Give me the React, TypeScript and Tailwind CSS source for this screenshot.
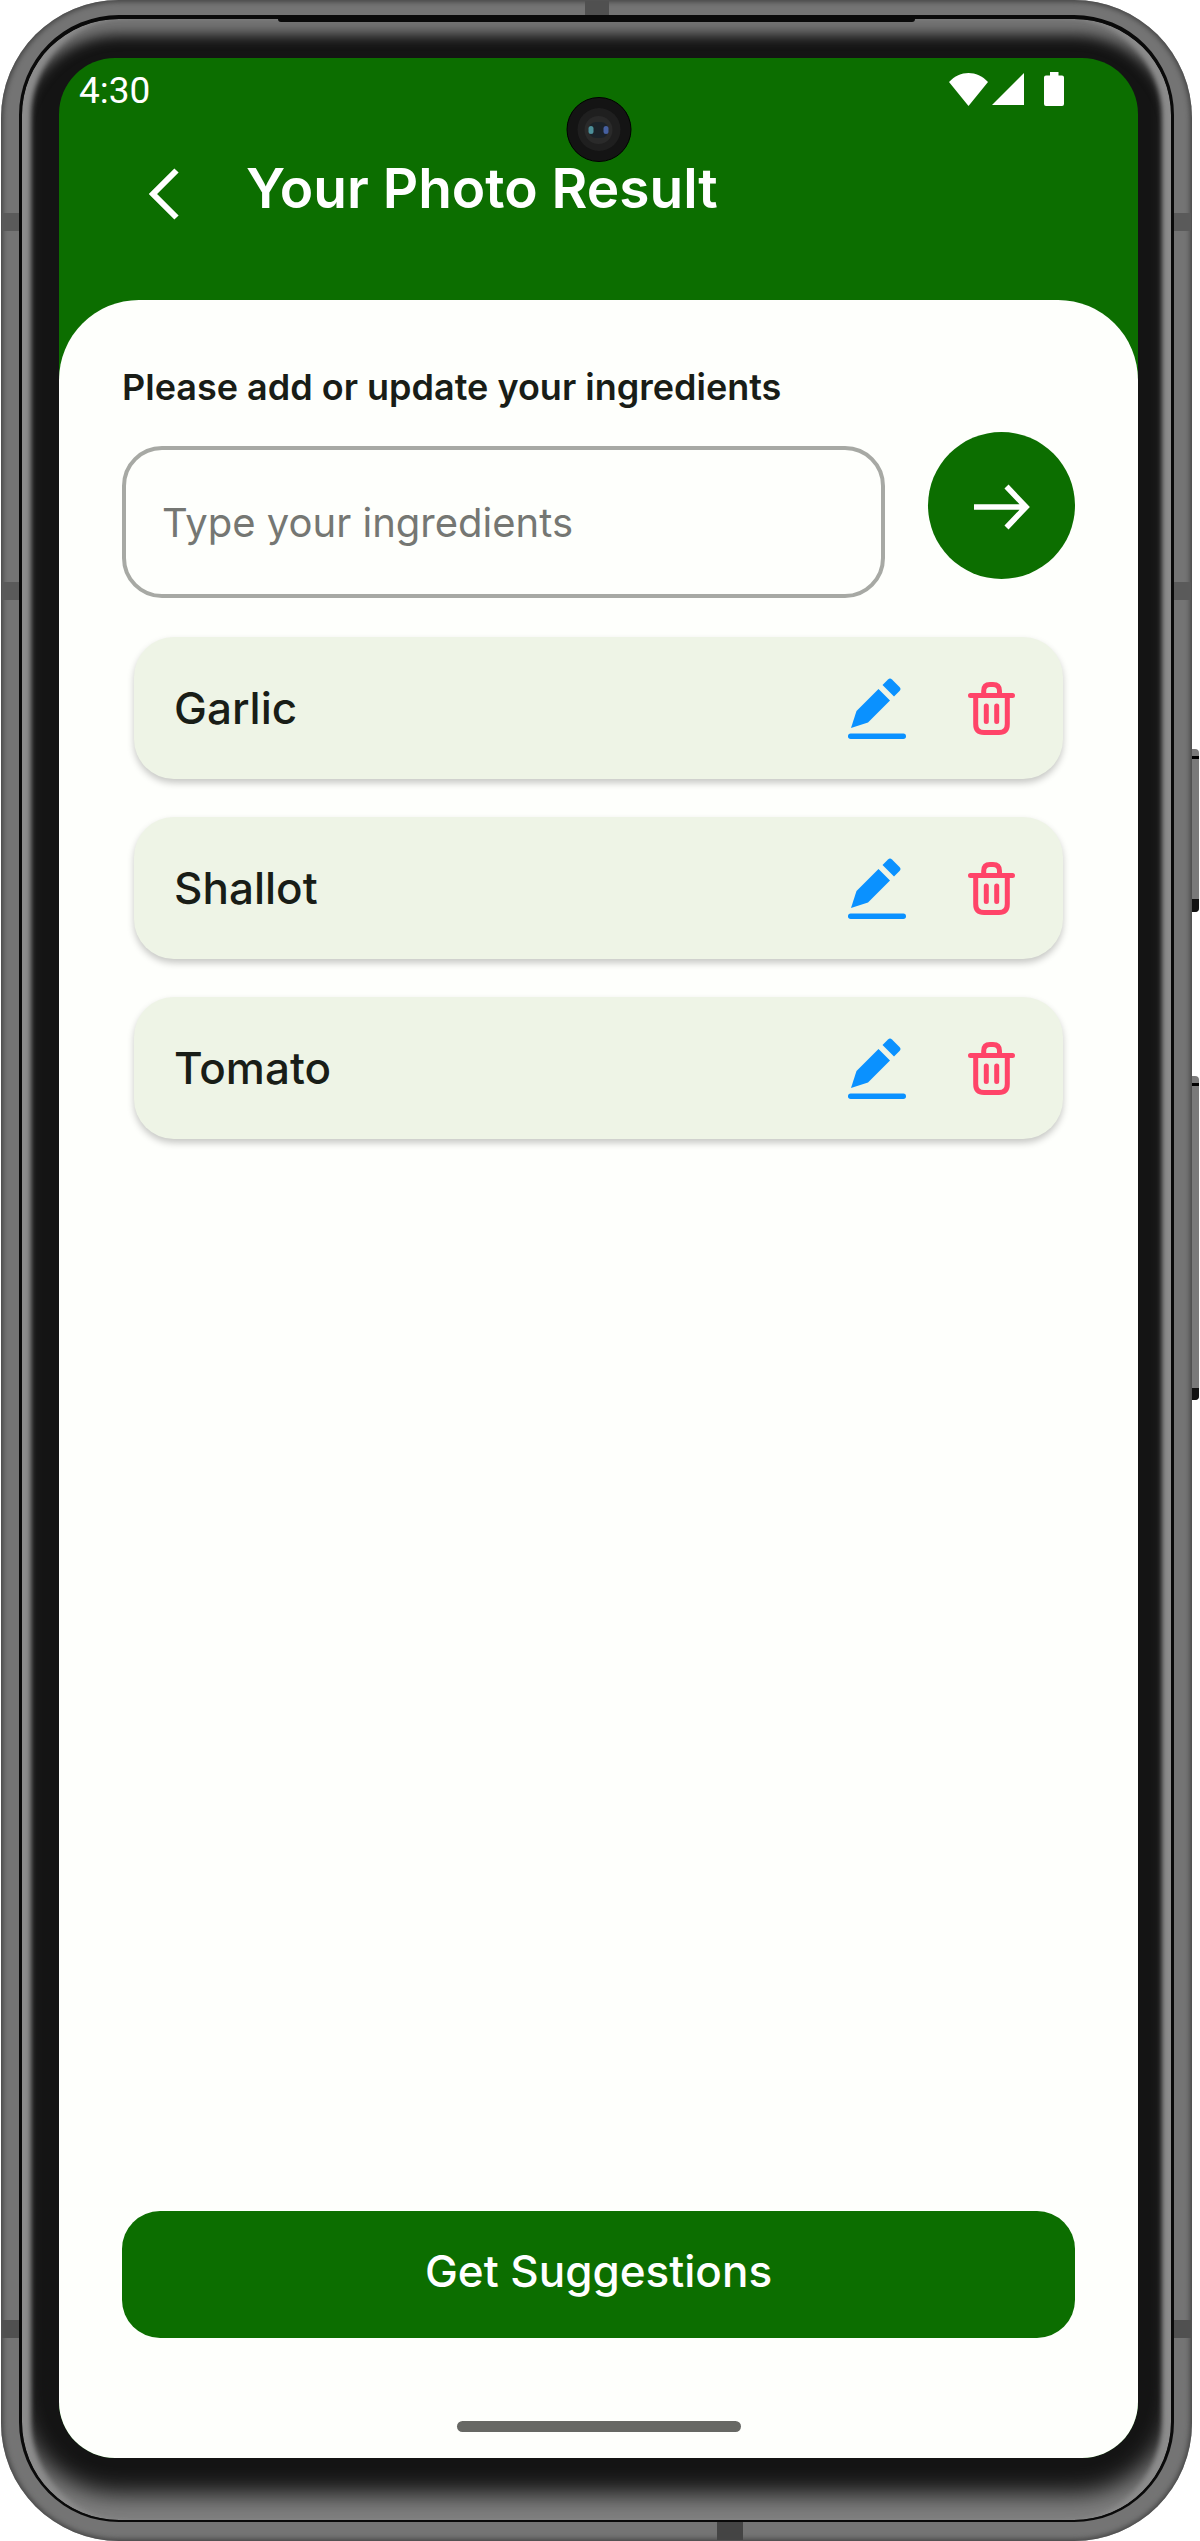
import { useState } from "react";

function WifiIcon() {
  return (
    <svg viewBox="0 0 39 33" className="h-[33px] w-[39px]" fill="currentColor" aria-hidden="true">
      <path d="M0 9C11-3 28-3 39 9L19.500 33Z" />
    </svg>
  );
}

function SignalIcon() {
  return (
    <svg viewBox="0 0 32 32" className="h-8 w-8" fill="currentColor" aria-hidden="true">
      <path d="M32 0V32H0Z" />
    </svg>
  );
}

function BatteryIcon() {
  return (
    <svg viewBox="0 0 20 34" className="h-[34px] w-5" fill="currentColor" aria-hidden="true">
      <path d="M6 0h8.500v3.500H18q2 0 2 2V32q0 2-2 2H2q-2 0-2-2V5.500q0-2 2-2h4Z" />
    </svg>
  );
}

function BackIcon() {
  return (
    <svg viewBox="0 0 32 52" className="h-[52px] w-8" fill="none" stroke="currentColor" strokeWidth="6" aria-hidden="true">
      <path d="M28.500 2.500L5 26L28.500 49.500" />
    </svg>
  );
}

function ArrowIcon() {
  return (
    <svg viewBox="0 0 56 46" className="h-[46px] w-14" fill="none" stroke="currentColor" strokeWidth="5.600" aria-hidden="true">
      <path d="M0 23H52M32.500 2.500L52 23L32.500 43.500" />
    </svg>
  );
}

function PencilIcon() {
  return (
    <svg viewBox="0 0 58 61" className="h-[61px] w-[58px]" fill="currentColor" aria-hidden="true">
      <path d="M30.500 11L42 22.500L20 44.500L3 50L8.500 33Z" />
      <path d="M34.500 7L40 1.500Q42 -.5 44 1.500L51.500 9Q53.500 11 51.500 13L46 18.500Z" />
      <rect x="0" y="55.500" width="58" height="5.400" rx="2.700" />
    </svg>
  );
}

function TrashIcon() {
  return (
    <svg
      viewBox="0 0 47 53"
      className="h-[53px] w-[47px]"
      fill="none"
      stroke="currentColor"
      strokeWidth="5"
      strokeLinecap="round"
      strokeLinejoin="round"
      aria-hidden="true"
    >
      <path d="M2.500 13.500H44.500M7.700 14V42Q7.700 50.500 16 50.500H31Q39.300 50.500 39.300 42V14M15.700 12V9Q15.700 2.500 22 2.500H25Q31.500 2.500 31.500 9V12M18.300 24V39.500M28.700 24V39.500" />
    </svg>
  );
}

function Camera() {
  return (
    <div className="absolute top-[39px] left-1/2 flex size-[65px] -translate-x-1/2 items-center justify-center rounded-full border border-black bg-[#141414]">
      <div className="flex size-[43px] items-center justify-center rounded-full bg-[#1f1f1f]">
        <div className="flex size-7 items-center justify-center rounded-full bg-[#2a2a2a]">
          <div className="flex h-4 w-5 items-center justify-between rounded-full bg-[#1b2229]">
            <span className="h-2 w-[5px] rounded-full bg-[#4d8f99]" />
            <span className="h-2 w-[5px] rounded-full bg-[#4660a0]" />
          </div>
        </div>
      </div>
    </div>
  );
}

function IngredientCard({ name, onDelete }: { name: string; onDelete: () => void }) {
  return (
    <li className="flex h-[142px] items-center rounded-[40px] bg-[#eef4e6] pr-12 pl-10 shadow-[0_4px_7px_rgba(0,0,0,0.22)]">
      <span className="grow text-[44px] leading-[60px] font-medium">{name}</span>
      <button type="button" aria-label={`Edit ${name}`} className="mr-[62px] text-[#0a91ff]">
        <PencilIcon />
      </button>
      <button type="button" aria-label={`Delete ${name}`} onClick={onDelete} className="text-[#ff4469]">
        <TrashIcon />
      </button>
    </li>
  );
}

export default function App() {
  const [items, setItems] = useState(["Garlic", "Shallot", "Tomato"]);
  const [draft, setDraft] = useState("");

  const add = () => {
    if (draft.trim()) {
      setItems([...items, draft.trim()]);
      setDraft("");
    }
  };

  return (
    <div className="min-h-screen bg-white pr-2 pl-px font-['Inter',sans-serif] text-[#191d17]">
      <div className="relative flex min-h-screen flex-col rounded-[118px] bg-[#747474] px-[18px] pt-[15px] pb-[19px] shadow-[inset_0_0_5px_2px_#454545]">
        {/* Side keys */}
        <div className="absolute top-[749px] -right-[7px] h-[163px] w-[7px] rounded-r-sm bg-[#7a7a7a]">
          <div className="mt-[7px] h-[3px] bg-black" />
          <div className="mt-[140px] h-[13px] rounded-br-sm bg-[#111]" />
        </div>
        <div className="absolute top-[1076px] -right-[7px] h-[324px] w-[7px] rounded-r-sm bg-[#7a7a7a]">
          <div className="mt-[7px] h-[3px] bg-black" />
          <div className="mt-[302px] h-3 rounded-br-sm bg-[#111]" />
        </div>
        {/* Antenna bands */}
        <div className="absolute top-[213px] left-px h-[18px] w-[17px] bg-[#5a5a5a]" />
        <div className="absolute top-[213px] right-px h-[18px] w-[17px] bg-[#5a5a5a]" />
        <div className="absolute top-[582px] left-px h-[18px] w-[17px] bg-[#5a5a5a]" />
        <div className="absolute top-[582px] right-px h-[18px] w-[17px] bg-[#5a5a5a]" />
        <div className="absolute bottom-[203px] left-px h-[18px] w-[17px] bg-[#505050]" />
        <div className="absolute right-px bottom-[203px] h-[18px] w-[17px] bg-[#505050]" />
        <div className="absolute top-px left-[584px] h-[14px] w-6 bg-[#505050]" />
        <div className="absolute bottom-px left-[716px] h-[18px] w-[26px] bg-[#444]" />

        <div className="relative flex grow flex-col rounded-[100px] border-x-[3px] border-t-4 border-b-2 border-[#0a0a0a] bg-[#141414] pt-[39px] pr-[33px] pb-[62px] pl-[37px] shadow-[inset_11px_0_5px_-2px_#8c8c8c,inset_-11px_0_5px_-2px_#8c8c8c,inset_0_-32px_24px_-6px_#808080,inset_0_19px_14px_-3px_#757575]">
          {/* Earpiece slot */}
          <div className="absolute inset-x-[256px] top-0 h-[3px] rounded-b-full bg-[#0a0a0a]" />
          <div className="relative flex grow flex-col overflow-hidden rounded-[56px] bg-[#0c6e00]">
            <Camera />
            <header className="h-[242px] text-white">
              <div className="flex items-start pt-2 pr-[74px] pl-5">
                <span className="grow font-['Roboto',sans-serif] text-[37px] leading-[50px]">4:30</span>
                <div className="flex items-center pt-1.5">
                  <WifiIcon />
                  <span className="mr-5 ml-1">
                    <SignalIcon />
                  </span>
                  <BatteryIcon />
                </div>
              </div>
              <div className="flex items-center gap-[66px] pt-10 pl-[89px]">
                <button type="button" aria-label="Back" className="mt-3">
                  <BackIcon />
                </button>
                <h1 className="text-[55px] leading-[60px] font-semibold">Your Photo Result</h1>
              </div>
            </header>

            <main className="flex grow flex-col rounded-t-[80px] bg-[#fefffc] px-[63px] pt-[60px]">
              <label htmlFor="ingredient" className="text-[36px] leading-[54px] font-semibold">
                Please add or update your ingredients
              </label>
              <div className="mt-[18px] flex items-start gap-[43px]">
                <input
                  id="ingredient"
                  type="text"
                  value={draft}
                  onChange={(e) => setDraft(e.target.value)}
                  placeholder="Type your ingredients"
                  className="mt-[14px] h-[152px] min-w-0 grow rounded-[40px] border-4 border-[#a7a9a4] bg-transparent px-9 text-[40px] outline-none placeholder:text-[#757773]"
                />
                <button
                  type="button"
                  aria-label="Add ingredient"
                  onClick={add}
                  className="flex size-[147px] shrink-0 items-center justify-center rounded-full bg-[#0c6e00] pt-0.5 text-white"
                >
                  <ArrowIcon />
                </button>
              </div>
              <ul className="mx-3 mt-[39px] flex grow flex-col gap-[38px]">
                {items.map((name, i) => (
                  <IngredientCard key={name + i} name={name} onDelete={() => setItems(items.filter((_, k) => k !== i))} />
                ))}
              </ul>
              <button type="button" className="h-[127px] rounded-[38px] bg-[#0c6e00] pb-2 text-[44px] font-medium text-white">
                Get Suggestions
              </button>
              <div className="mx-auto mt-[83px] mb-[26px] h-[11px] w-[284px] rounded-full bg-[#676864]" />
            </main>
          </div>
        </div>
      </div>
    </div>
  );
}
